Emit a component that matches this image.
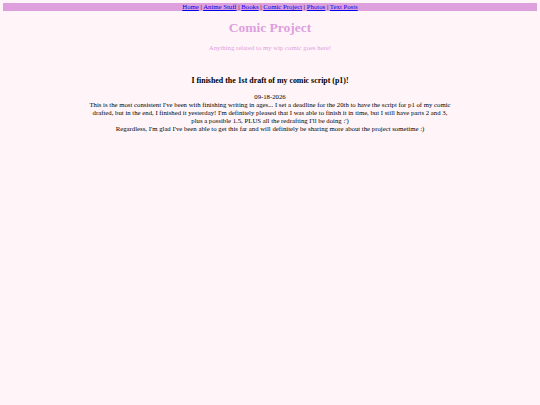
export default function App() {
  const links = ["Home", "Anime Stuff", "Books", "Comic Project", "Photos", "Text Posts"];
  return (
    <div className="min-h-[405px] bg-[#fff5f9] px-[3.4px] py-[3.4px] text-black" style={{ fontFamily: '"Liberation Serif", "Times New Roman", serif' }}>
      <div className="bg-[#dda0dd] text-center text-[6.75px] leading-[7.8px]">
        {links.map((l, i) => (
          <span key={l}>
            <a href="#" className="text-[#0000ee] underline">{l}</a>
            {i < links.length - 1 ? " | " : ""}
          </span>
        ))}
      </div>
      <h1 className="mt-[9px] mb-[8px] text-center text-[13.5px] font-bold leading-[15.5px] text-[#dda0dd]">Comic Project</h1>
      <p className="text-center text-[6.75px] leading-[7.8px] text-[#dda0dd]">Anything related to my wip comic goes here!</p>
      <div className="mt-[25px] text-center">
        <h3 className="text-[7.9px] font-bold leading-[9px]">I finished the 1st draft of my comic script (p1)!</h3>
        <p className="mt-[8px] text-[6.75px] leading-[7.8px]">09-18-2026</p>
        <p className="text-[6.75px] leading-[8px]">
          This is the most consistent I've been with finishing writing in ages... I set a deadline for the 20th to have the script for p1 of my comic
          <br />
          drafted, but in the end, I finished it yesterday! I'm definitely pleased that I was able to finish it in time, but I still have parts 2 and 3,
          <br />
          plus a possible 1.5, PLUS all the redrafting I'll be doing :')
        </p>
        <p className="text-[6.75px] leading-[8px]">Regardless, I'm glad I've been able to get this far and will definitely be sharing more about the project sometime :)</p>
      </div>
    </div>
  );
}
